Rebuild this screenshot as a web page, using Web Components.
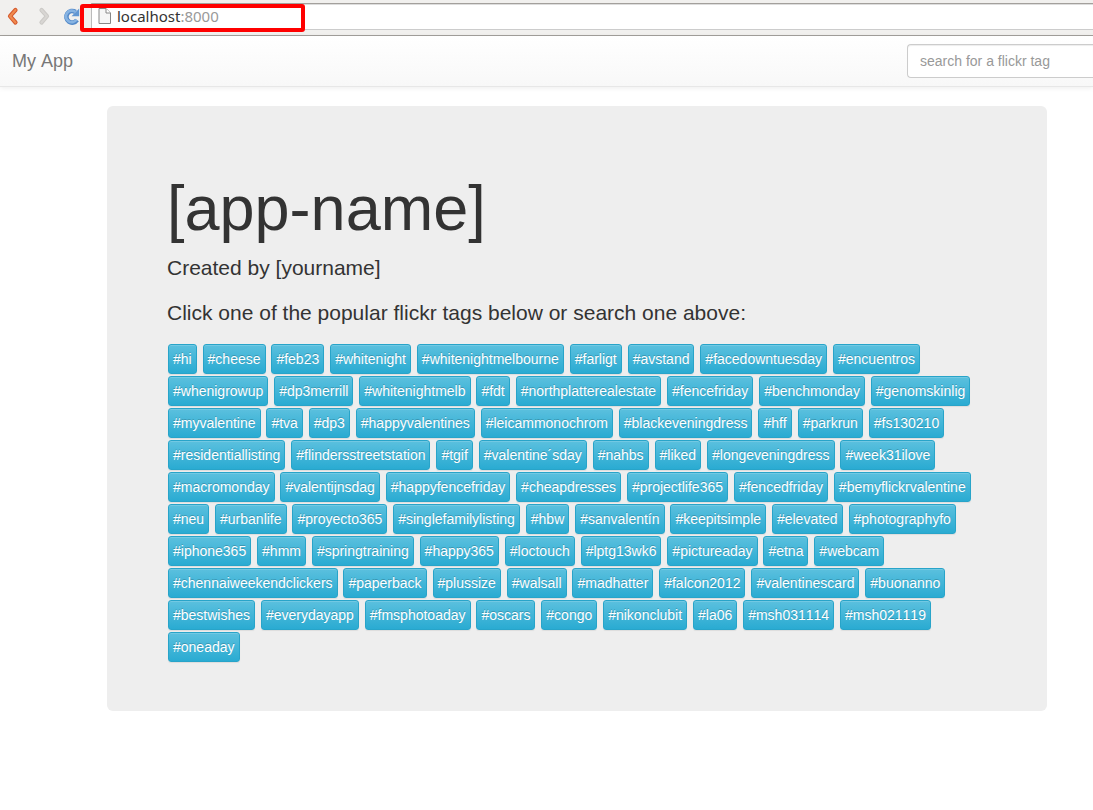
<!DOCTYPE html>
<html lang="en">
<head>
<meta charset="utf-8">
<title>My App</title>
<style>
  body { margin: 0; background: #fff; color: #333; overflow-x: hidden; font: 14px/20px "Liberation Sans", Arial, sans-serif; font-kerning: none; }
</style>
</head>
<body>
<browser-bar><span slot="host">localhost</span><span slot="port">:8000</span></browser-bar>
<app-navbar brand="My App" placeholder="search for a flickr tag"></app-navbar>
<app-jumbotron>
  <span slot="title">[app-name]</span>
  <span slot="author">Created by [yourname]</span>
  <span slot="hint">Click one of the popular flickr tags below or search one above:</span>
  <tag-list></tag-list>
</app-jumbotron>

<script>
class BaseElement extends HTMLElement {
  render(html) { this.attachShadow({ mode: 'open' }).innerHTML = html; }
}

customElements.define('browser-bar', class extends BaseElement {
  connectedCallback() {
    this.render(`
      <style>
        :host { display: flex; box-sizing: border-box; height: 36px; padding-top: 3px; background: #f1f0ee; border-bottom: 1px solid #a3a09c; }
        button { border: 0; padding: 0; margin: 0; background: none; width: 30px; height: 27px; flex: none; }
        button svg { display: block; }
        .field { position: relative; flex: 1; display: flex; margin-left: 1px; }
        .address { flex: 1; box-sizing: border-box; height: 27px; display: flex; align-items: center; gap: 6px; padding: 0 0 2px 6px; background: #fff;
          border: solid #a3a09c; border-width: 1px 0 1px 1px; border-bottom-color: #ccc; border-left-color: #bbb; box-shadow: inset 0 1px 0 #ddd; }
        .url { font: 15px/20px "Noto Sans", sans-serif; color: #333; }
        .port { color: #999; }
        .mark { position: absolute; left: -11px; top: 1px; width: 217px; height: 20px; border: 4px solid #f00; border-radius: 3px; }
      </style>
      <button aria-label="Back"><svg width="30" height="27"><path d="M15.500 7 L10 13.200 L15.500 19.500" fill="none" stroke="#d4582c" stroke-width="4.200" stroke-linecap="round" stroke-linejoin="round"/><path d="M15.500 7 L10 13.200 L15.500 19.500" fill="none" stroke="#f08a4e" stroke-width="2.200" stroke-linecap="round" stroke-linejoin="round"/></svg></button>
      <button aria-label="Forward"><svg width="30" height="27"><path d="M11.500 7 L17 13.200 L11.500 19.500" fill="none" stroke="#cbc9c6" stroke-width="4.200" stroke-linecap="round" stroke-linejoin="round"/><path d="M11.500 7 L17 13.200 L11.500 19.500" fill="none" stroke="#d8d6d3" stroke-width="2.200" stroke-linecap="round" stroke-linejoin="round"/></svg></button>
      <button aria-label="Reload"><svg width="30" height="27"><path d="M17 17 A5.800 5.800 0 1 1 15.500 9" fill="none" stroke="#5288c8" stroke-width="4.600"/><path d="M16.600 16.600 A5.800 5.800 0 1 1 15.500 9" fill="none" stroke="#86b3e2" stroke-width="2.600"/><path d="M19.200 5.500 V13.200 H11.500 Z" fill="#6096d2"/></svg></button>
      <div class="field">
        <div class="address">
          <svg width="13" height="16" viewBox="0 0 13 16"><path d="M1 .5 H8 L12.500 5 V15.500 H1 Z" fill="#f6f6f6" stroke="#888"/><path d="M8 .5 V5 H12.500" fill="#fff" stroke="#888"/></svg>
          <div class="url"><slot name="host"></slot><span class="port"><slot name="port"></slot></span></div>
        </div>
        <div class="mark"></div>
      </div>`);
  }
});

customElements.define('app-navbar', class extends BaseElement {
  connectedCallback() {
    this.render(`
      <style>
        :host { display: flex; align-items: center; justify-content: space-between; box-sizing: border-box; height: 51px; padding-left: 12px;
          background: linear-gradient(#fff, #f8f8f8); border-bottom: 1px solid #e7e7e7; box-shadow: 0 1px 5px rgba(0,0,0,.075); }
        a { font-size: 18px; line-height: 20px; color: #777; text-decoration: none; }
        input { box-sizing: border-box; width: 186px; height: 34px; margin: 0; padding: 6px 12px; font: 14px/20px "Liberation Sans", Arial, sans-serif; color: #555;
          background: #fff; border: 1px solid #ccc; border-right: 0; border-radius: 4px 0 0 4px; box-shadow: inset 0 1px 1px rgba(0,0,0,.075); }
        input::placeholder { color: #999; opacity: 1; }
      </style>
      <a href="#">${this.getAttribute('brand')}</a>
      <input type="search" aria-label="Search for a flickr tag" placeholder="${this.getAttribute('placeholder')}">`);
  }
});

customElements.define('app-jumbotron', class extends BaseElement {
  connectedCallback() {
    this.render(`
      <style>
        :host { display: block; padding: 19px 46px 30px 107px; }
        section { box-sizing: border-box; max-width: 940px; margin: 0 auto; padding: 48px 60px; background: #eee; border-radius: 6px; }
        h1 { margin: 20px 0 10px; font-size: 63px; line-height: 69px; font-weight: 500; }
        p { margin: 0 0 15px; font-size: 21px; line-height: 30px; }
      </style>
      <section>
        <h1><slot name="title"></slot></h1>
        <p><slot name="author"></slot></p>
        <p><slot name="hint"></slot></p>
        <slot></slot>
      </section>`);
  }
});

customElements.define('flickr-tag', class extends BaseElement {
  connectedCallback() {
    this.render(`
      <style>
        :host { display: inline-block; margin: 1px; vertical-align: top; }
        button { display: block; margin: 0; padding: 4px; font: 14px/20px "Liberation Sans", Arial, sans-serif; font-kerning: none; color: #fff; white-space: nowrap; cursor: pointer;
          background: linear-gradient(#5bc0de, #2aabd2); border: 1px solid #28a4c9; border-radius: 3px; text-shadow: 0 -1px 0 rgba(0,0,0,.2);
          box-shadow: inset 0 1px 0 rgba(255,255,255,.15), 0 1px 1px rgba(0,0,0,.075); }
      </style>
      <button type="button"><slot></slot></button>`);
  }
});

const TAGS = `hi cheese feb23 whitenight whitenightmelbourne farligt avstand facedowntuesday encuentros
whenigrowup dp3merrill whitenightmelb fdt northplatterealestate fencefriday benchmonday genomskinlig
myvalentine tva dp3 happyvalentines leicammonochrom blackeveningdress hff parkrun fs130210
residentiallisting flindersstreetstation tgif valentine´sday nahbs liked longeveningdress week31ilove
macromonday valentijnsdag happyfencefriday cheapdresses projectlife365 fencedfriday bemyflickrvalentine
neu urbanlife proyecto365 singlefamilylisting hbw sanvalentín keepitsimple elevated photographyfo
iphone365 hmm springtraining happy365 loctouch lptg13wk6 pictureaday etna webcam
chennaiweekendclickers paperback plussize walsall madhatter falcon2012 valentinescard buonanno
bestwishes everydayapp fmsphotoaday oscars congo nikonclubit la06 msh031114 msh021119
oneaday`.split(/\s+/);

customElements.define('tag-list', class extends BaseElement {
  connectedCallback() {
    this.render(`
      <style>:host { display: block; font-size: 14px; line-height: 20px; }</style>
      ${TAGS.map(t => `<flickr-tag>#${t}</flickr-tag>`).join(' ')}`);
  }
});
</script>
</body>
</html>
